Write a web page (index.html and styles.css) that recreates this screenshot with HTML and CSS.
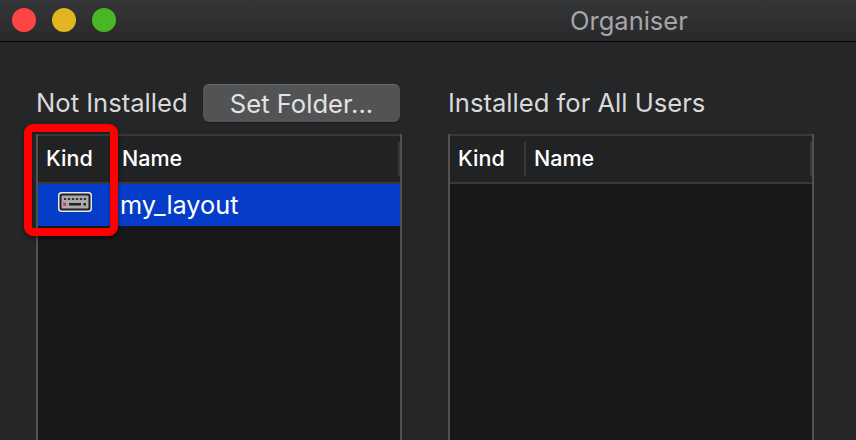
FILE: index.html
```html
<!DOCTYPE html>
<html lang="en">
<head>
<meta charset="utf-8">
<title>Organiser</title>
<link rel="stylesheet" href="styles.css">
</head>
<body>
<header class="titlebar">
  <div class="lights"><i class="light close"></i><i class="light minimise"></i><i class="light expand"></i></div>
  <h1 class="title">Organiser</h1>
</header>
<main class="panels">
  <section class="panel">
    <div class="heading"><h2 class="label label-left">Not Installed</h2><button class="folder"><span>Set Folder...</span></button></div>
    <div class="table">
      <div class="columns"><span class="kind"><b>Kind</b></span><span class="name"><b>Name</b></span></div>
      <div class="row">
        <span class="icon-cell">
          <svg class="keyboard" viewBox="0 0 34 20" width="34" height="20">
            <rect width="34" height="20" rx="3.5" fill="#e4e5e9"/>
            <rect x="1.5" y="1.5" width="31" height="17" rx="2.5" fill="#202126"/>
            <rect x="3.5" y="3.5" width="27" height="13" rx="1" fill="#aaaaac"/>
            <path d="M6 7H28" stroke="#303136" stroke-width="2" stroke-dasharray="2.2 1.76"/>
            <path d="M11 12.3H23M25.5 12.3H28" stroke="#202126" stroke-width="2.4"/>
            <rect x="5.2" y="10.8" width="3" height="3" fill="#e3343d"/>
          </svg>
        </span>
        <span class="file">my_layout</span>
      </div>
      <div class="annotation"></div>
    </div>
  </section>
  <section class="panel">
    <div class="heading"><h2 class="label label-right">Installed for All Users</h2></div>
    <div class="table">
      <div class="columns"><span class="kind"><b>Kind</b></span><span class="name"><b>Name</b></span></div>
    </div>
  </section>
</main>
</body>
</html>
```
FILE: styles.css
```css
* { box-sizing: border-box; }
body {
  margin: 0;
  width: 856px;
  height: 440px;
  overflow: hidden;
  display: flex;
  flex-direction: column;
  background: #252628;
  color: #d9d9da;
  font-family: Inter, "Liberation Sans", sans-serif;
  white-space: nowrap;
}
h1, h2 { margin: 0; font-weight: 400; }
.titlebar {
  flex: 0 0 42px;
  display: flex;
  align-items: flex-start;
  padding: 8px 0 0 12px;
  border-bottom: 1px solid #000;
  background: linear-gradient(#353638, #29292b);
}
.lights { display: flex; gap: 16px; width: 558px; }
.light { width: 24px; height: 24px; border-radius: 50%; }
.close { background: #ff4543; }
.minimise { background: #e1b421; }
.expand { background: #47b824; }
.title { color: #a6a6a9; font-size: 25.5px; line-height: 26px; }
.panels { display: flex; gap: 46px; padding: 42px 0 0 36px; height: 398px; }
.panel { width: 366px; display: flex; flex-direction: column; }
.heading { height: 50px; display: flex; align-items: flex-start; }
.label { font-size: 25.6px; line-height: 38px; }
.label-left { width: 167px; }
.folder {
  width: 197px;
  height: 38px;
  padding: 0;
  border: 0;
  border-top: 1px solid #6a6b6c;
  border-radius: 6px;
  background: #525354;
  color: #e3e3e3;
  font: 25.6px/37px Inter, "Liberation Sans", sans-serif;
  box-shadow: 0 1px 1px #19191a;
}
.table {
  position: relative;
  flex: 1;
  border: solid #505153;
  border-width: 0 2px;
  background: #18181a;
}
.columns {
  height: 50px;
  display: flex;
  align-items: center;
  border: solid #38393b;
  border-width: 2px 0;
  background: #212224;
  color: #fff;
  font-size: 21.5px;
  line-height: 32px;
}
.columns b { font-weight: 500; }
.kind, .name { height: 34px; border-right: 2px solid #38393b; }
.kind { width: 76px; padding-left: 8px; }
.name { flex: 1; padding-left: 8px; }
.row { height: 42px; display: flex; background: #063dc8; color: #fff; }
.icon-cell { width: 82px; padding: 8px 0 0 20px; }
.keyboard { display: block; }
.file { font-size: 25.3px; line-height: 42px; }
.annotation {
  position: absolute;
  left: -14px;
  top: -10px;
  width: 94px;
  height: 112px;
  border: 8px solid #f00;
  border-radius: 9px;
  box-shadow: 0 2px 4px #0008, inset 0 1px 3px #0006;
}
```
